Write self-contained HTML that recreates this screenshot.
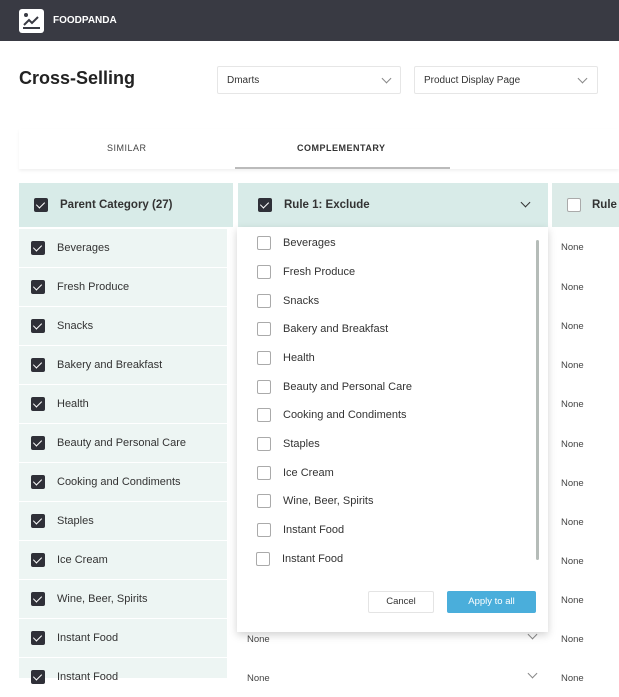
<!DOCTYPE html>
<html><head><meta charset="utf-8"><style>
*{box-sizing:border-box;margin:0;padding:0}
body{width:619px;height:678px;overflow:hidden;background:#fff;font-family:"Liberation Sans",sans-serif;color:#333;position:relative}
.top{position:absolute;left:0;top:0;width:619px;height:41px;background:#393a43}
.logo{position:absolute;left:19px;top:9px;width:25px;height:24px;background:#fff;border-radius:3px}
.brand{position:absolute;left:53px;top:15px;color:#fff;font-size:10px;font-weight:bold}
h1{position:absolute;left:19px;top:68px;font-size:18px;font-weight:bold;color:#222}
.sel{position:absolute;top:66px;height:28px;border:1px solid #e6e6e6;border-radius:2px;font-size:10px;padding:8px 0 0 9px;color:#333}
.chev{position:absolute;width:7px;height:7px;border-right:1px solid #888;border-bottom:1px solid #888;transform:rotate(45deg)}
.tabs{position:absolute;left:19px;top:129px;width:600px;height:40px;background:#fff;box-shadow:0 2px 3px rgba(0,0,0,.06)}
.tab{position:absolute;top:14px;font-size:9px;letter-spacing:.5px;font-weight:bold}
.cb{position:absolute;width:14px;height:14px;border-radius:2px}
.cb.on{background:#2f3038}
.cb.on:after{content:"";position:absolute;left:4px;top:2px;width:4px;height:7px;border-right:1.5px solid #fff;border-bottom:1.5px solid #fff;transform:rotate(45deg)}
.cb.off{border:1.5px solid #aaa;background:#fff}
.hd{position:absolute;top:183px;height:44px;background:#d8ebe8;font-size:11.5px;font-weight:bold;color:#333}
.lc{position:absolute;left:19px;top:229px;width:208px;height:449px;background:#edf5f3}
.row{position:absolute;left:0;width:208px;height:39px;border-bottom:1px solid #fff;font-size:11px}
.row span{position:absolute;left:38px;top:13px}
.row .cb{left:12px;top:12px}
.none{position:absolute;font-size:9.5px;color:#444}
.panel{position:absolute;left:237px;top:227px;width:311px;height:405px;background:#fff;box-shadow:0 3px 8px rgba(0,0,0,.18)}
.it{position:absolute;left:20px;font-size:11px}
.it .cb{left:0;top:0}
.it span{position:absolute;left:26px;top:1px;white-space:nowrap}
</style></head><body>
<div class="top"><div class="logo"><svg width="25" height="24" viewBox="0 0 25 24"><circle cx="7" cy="6" r="2" fill="#393a43"/><path d="M5 16 L10 11 L13 14 L19 8" stroke="#393a43" stroke-width="2" fill="none"/><path d="M4 19 H21" stroke="#393a43" stroke-width="2"/></svg></div><div class="brand">FOODPANDA</div></div>
<h1>Cross-Selling</h1>
<div class="sel" style="left:217px;width:184px">Dmarts<div class="chev" style="left:165px;top:8px"></div></div>
<div class="sel" style="left:414px;width:184px">Product Display Page<div class="chev" style="left:164px;top:8px"></div></div>
<div class="tabs"><div class="tab" style="left:88px;color:#444;font-weight:normal">SIMILAR</div><div class="tab" style="left:278px">COMPLEMENTARY</div><div style="position:absolute;left:216px;top:38px;width:215px;height:2px;background:#bbb"></div></div>
<div class="hd" style="left:19px;width:214px"><div class="cb on" style="left:15px;top:15px"></div><span style="position:absolute;left:41px;top:16px">Parent Category (27)</span></div>
<div class="hd" style="left:238px;width:310px"><div class="cb on" style="left:20px;top:15px"></div><span style="position:absolute;left:46px;top:16px">Rule 1: Exclude</span><div class="chev" style="left:284px;top:16px;border-color:#333;border-width:1.5px"></div></div>
<div class="hd" style="left:552px;width:67px;background:#dcebe8"><div class="cb off" style="left:15px;top:15px"></div><span style="position:absolute;left:40px;top:16px">Rule</span></div>
<div class="lc">
<div class="row" style="top:0"><div class="cb on"></div><span>Beverages</span></div>
<div class="row" style="top:39px"><div class="cb on"></div><span>Fresh Produce</span></div>
<div class="row" style="top:78px"><div class="cb on"></div><span>Snacks</span></div>
<div class="row" style="top:117px"><div class="cb on"></div><span>Bakery and Breakfast</span></div>
<div class="row" style="top:156px"><div class="cb on"></div><span>Health</span></div>
<div class="row" style="top:195px"><div class="cb on"></div><span>Beauty and Personal Care</span></div>
<div class="row" style="top:234px"><div class="cb on"></div><span>Cooking and Condiments</span></div>
<div class="row" style="top:273px"><div class="cb on"></div><span>Staples</span></div>
<div class="row" style="top:312px"><div class="cb on"></div><span>Ice Cream</span></div>
<div class="row" style="top:351px"><div class="cb on"></div><span>Wine, Beer, Spirits</span></div>
<div class="row" style="top:390px"><div class="cb on"></div><span>Instant Food</span></div>
<div class="row" style="top:429px"><div class="cb on"></div><span>Instant Food</span></div>
</div>
<div class="none" style="left:561px;top:242px">None</div><div class="none" style="left:561px;top:282px">None</div><div class="none" style="left:561px;top:321px">None</div><div class="none" style="left:561px;top:360px">None</div><div class="none" style="left:561px;top:399px">None</div><div class="none" style="left:561px;top:439px">None</div><div class="none" style="left:561px;top:478px">None</div><div class="none" style="left:561px;top:517px">None</div><div class="none" style="left:561px;top:556px">None</div><div class="none" style="left:561px;top:595px">None</div><div class="none" style="left:561px;top:634px">None</div><div class="none" style="left:561px;top:673px">None</div>
<div class="none" style="left:247px;top:634px">None</div><div class="chev" style="left:529px;top:631px"></div>
<div class="none" style="left:247px;top:673px">None</div><div class="chev" style="left:529px;top:670px"></div>
<div class="panel">
<div class="it" style="top:9px"><div class="cb off"></div><span>Beverages</span></div>
<div class="it" style="top:38px"><div class="cb off"></div><span>Fresh Produce</span></div>
<div class="it" style="top:67px"><div class="cb off"></div><span>Snacks</span></div>
<div class="it" style="top:95px"><div class="cb off"></div><span>Bakery and Breakfast</span></div>
<div class="it" style="top:124px"><div class="cb off"></div><span>Health</span></div>
<div class="it" style="top:153px"><div class="cb off"></div><span>Beauty and Personal Care</span></div>
<div class="it" style="top:181px"><div class="cb off"></div><span>Cooking and Condiments</span></div>
<div class="it" style="top:210px"><div class="cb off"></div><span>Staples</span></div>
<div class="it" style="top:239px"><div class="cb off"></div><span>Ice Cream</span></div>
<div class="it" style="top:267px"><div class="cb off"></div><span>Wine, Beer, Spirits</span></div>
<div class="it" style="top:296px"><div class="cb off"></div><span>Instant Food</span></div>
<div class="it" style="top:325px;left:19px"><div class="cb off"></div><span>Instant Food</span></div>
<div style="position:absolute;left:299px;top:13px;width:3px;height:320px;background:#b5bcb8;border-radius:2px"></div>
<div style="position:absolute;left:131px;top:364px;width:66px;height:22px;border:1px solid #e4e4e4;border-radius:2px;font-size:9.5px;text-align:center;line-height:20px">Cancel</div>
<div style="position:absolute;left:210px;top:364px;width:89px;height:22px;background:#4aaedb;border-radius:2px;font-size:9.5px;color:#fff;text-align:center;line-height:22px">Apply to all</div>
</div>
</body></html>
